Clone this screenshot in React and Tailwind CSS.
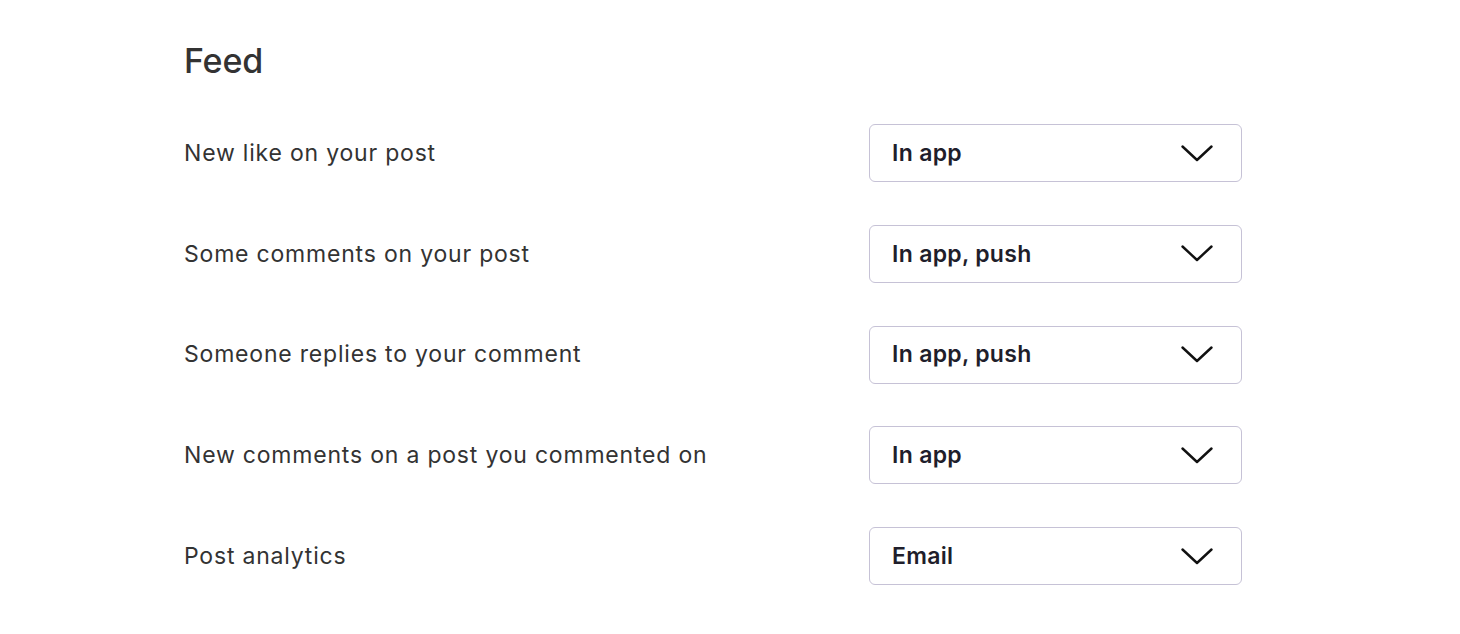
import React from 'react'

const rows = [
  { label: 'New like on your post', value: 'In app' },
  { label: 'Some comments on your post', value: 'In app, push' },
  { label: 'Someone replies to your comment', value: 'In app, push' },
  { label: 'New comments on a post you commented on', value: 'In app' },
  { label: 'Post analytics', value: 'Email' },
]

const Chevron = () => (
  <svg width="32" height="17" viewBox="0 0 32 17" fill="none">
    <path d="M1.5 1.5 L16 15 L30.5 1.5" stroke="#111" strokeWidth="2.4" strokeLinecap="round" strokeLinejoin="round" />
  </svg>
)

const App = () => {
  return (
    <div className="min-h-screen bg-white pl-[184px] pt-[41px]" style={{ fontFamily: 'Inter, "Noto Sans", sans-serif' }}>
      <h1 className="text-[34px] leading-[40px] font-medium text-[#333333] tracking-[-0.2px]">Feed</h1>
      <div className="mt-[43px] flex w-[1058px] flex-col gap-[42.8px]">
        {rows.map((row, index) => (
          <div key={index} className="flex items-center justify-between">
            <span className="text-[23px] tracking-[0.8px] text-[#333333]">{row.label}</span>
            <div className="flex h-[58px] w-[373px] items-center justify-between rounded-[6px] border border-[#c6c2d6] pl-[22px] pr-[28px]">
              <span className="text-[23px] font-semibold tracking-[0.3px] text-[#1f1e2b]">{row.value}</span>
              <Chevron />
            </div>
          </div>
        ))}
      </div>
    </div>
  )
}

export default App
